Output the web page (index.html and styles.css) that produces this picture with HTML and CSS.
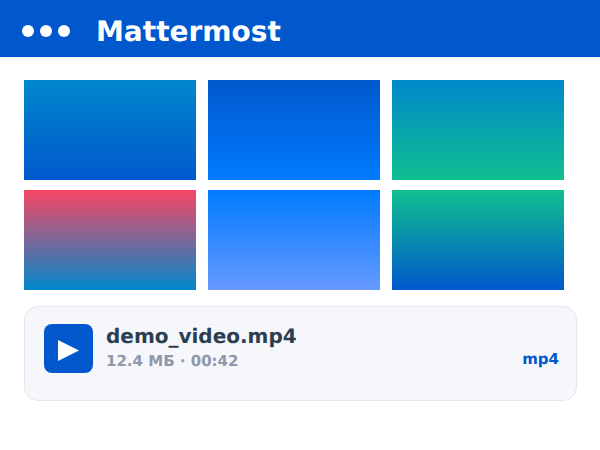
FILE: index.html
```html
<!DOCTYPE html>
<html lang="en">
<head>
    <meta charset="UTF-8">
    <title>Mattermost</title>
    <link rel="stylesheet" href="styles.css">
</head>
<body>
    <!-- Top bar -->
    <header class="topbar">
        <div class="dots">
            <span class="dot"></span>
            <span class="dot"></span>
            <span class="dot"></span>
        </div>
        <h1 class="title">Mattermost</h1>
    </header>

    <main class="content">
        <!-- Thumbnails -->
        <div class="gallery">
            <div class="tile tile-1"></div>
            <div class="tile tile-2"></div>
            <div class="tile tile-3"></div>
            <div class="tile tile-4"></div>
            <div class="tile tile-5"></div>
            <div class="tile tile-6"></div>
        </div>

        <!-- File attachment -->
        <div class="file-card">
            <div class="file-icon">
                <svg width="21" height="21" viewBox="0 0 21 21"><path d="M0 0L21 10.5L0 21Z" fill="#fff"/></svg>
            </div>
            <div class="file-info">
                <div class="file-name">demo_video.mp4</div>
                <div class="file-meta">12.4 МБ · 00:42</div>
            </div>
            <div class="file-ext">mp4</div>
        </div>
    </main>
</body>
</html>
```

FILE: styles.css
```css
body {
    margin: 0;
    background: #fff;
    font-family: "DejaVu Sans", sans-serif;
    text-rendering: geometricPrecision;
}
.topbar {
    display: flex;
    align-items: center;
    box-sizing: border-box;
    height: 57px;
    padding: 5px 0 0 22px;
    background: #0058cc;
    color: #fff;
}
.dots {
    display: flex;
    gap: 6px;
    width: 74px;
}
.dot {
    width: 12px;
    height: 12px;
    border-radius: 50%;
    background: #fff;
}
.title {
    margin: 0;
    font-size: 28px;
    font-weight: 700;
}
.content {
    padding: 23px 23px 0 24px;
}
.gallery {
    display: grid;
    grid-template-columns: repeat(3, 172px);
    grid-auto-rows: 100px;
    column-gap: 12px;
    row-gap: 10px;
}
.tile-1 { background: linear-gradient(180deg, #0088cc, #0058cc); }
.tile-2 { background: linear-gradient(180deg, #0058cc, #007bff); }
.tile-3 { background: linear-gradient(180deg, #0088cc, #10c090); }
.tile-4 { background: linear-gradient(180deg, #f84664, #0088cc); }
.tile-5 { background: linear-gradient(180deg, #007bff, #6699ff); }
.tile-6 { background: linear-gradient(180deg, #10c090, #0058cc); }
.file-card {
    display: flex;
    align-items: flex-start;
    box-sizing: border-box;
    height: 95px;
    margin-top: 16px;
    padding: 17px 17px 0 19px;
    background: #f5f7fb;
    border: 1px solid #e3e7ef;
    border-radius: 14px;
}
.file-icon {
    display: flex;
    align-items: center;
    justify-content: center;
    flex: none;
    width: 49px;
    height: 49px;
    padding: 4px 1px 0 0;
    box-sizing: border-box;
    border-radius: 8px;
    background: #0058cc;
}
.file-info {
    flex: 1;
    margin-left: 13px;
}
.file-name {
    font-size: 20px;
    font-weight: 700;
    color: #2c3e50;
}
.file-meta {
    margin-top: 4px;
    font-size: 15px;
    font-weight: 700;
    color: #8f98ab;
}
.file-ext {
    margin-top: 26px;
    font-size: 15px;
    font-weight: 700;
    color: #0058cc;
}
```
